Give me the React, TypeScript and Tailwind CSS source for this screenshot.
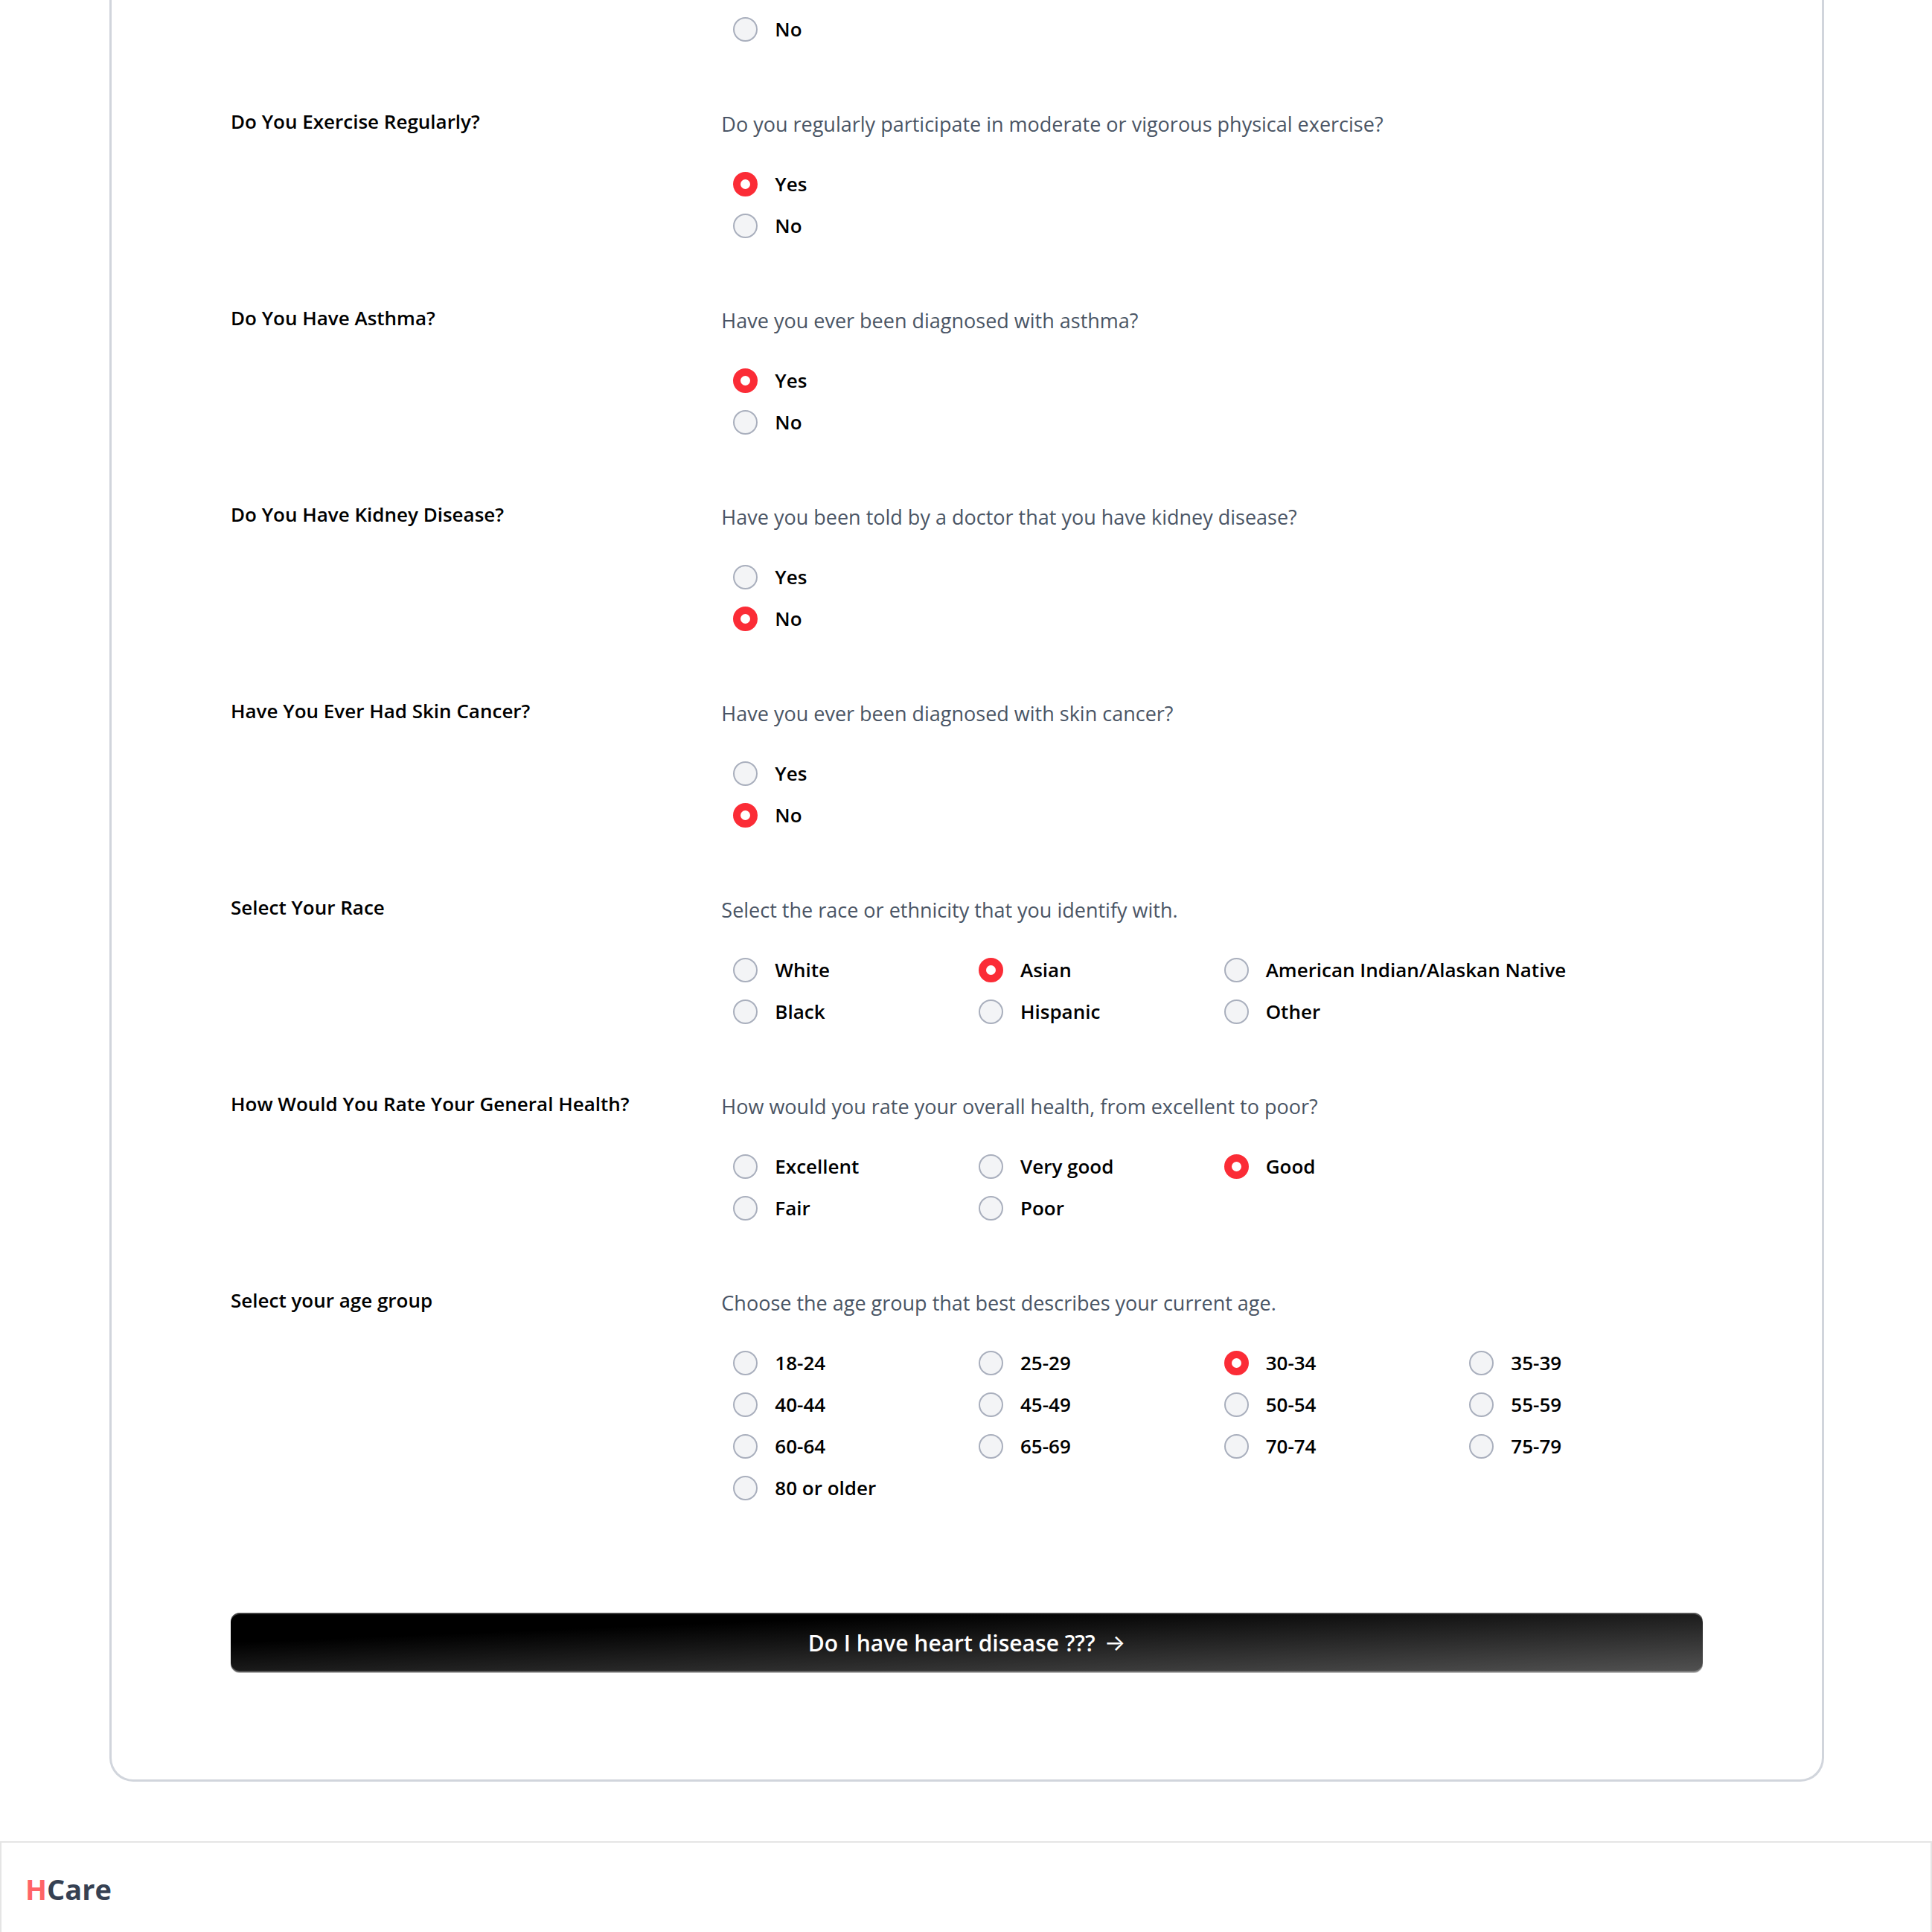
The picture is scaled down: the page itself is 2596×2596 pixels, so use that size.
type Question = {
  id: string;
  title: string;
  hint: string;
  options: string[];
  selected?: string;
  wide?: boolean;
};

const questions: Question[] = [
  {
    id: "exercise",
    title: "Do You Exercise Regularly?",
    hint: "Do you regularly participate in moderate or vigorous physical exercise?",
    options: ["Yes", "No"],
    selected: "Yes",
  },
  {
    id: "asthma",
    title: "Do You Have Asthma?",
    hint: "Have you ever been diagnosed with asthma?",
    options: ["Yes", "No"],
    selected: "Yes",
  },
  {
    id: "kidney",
    title: "Do You Have Kidney Disease?",
    hint: "Have you been told by a doctor that you have kidney disease?",
    options: ["Yes", "No"],
    selected: "No",
  },
  {
    id: "skin",
    title: "Have You Ever Had Skin Cancer?",
    hint: "Have you ever been diagnosed with skin cancer?",
    options: ["Yes", "No"],
    selected: "No",
  },
  {
    id: "race",
    title: "Select Your Race",
    hint: "Select the race or ethnicity that you identify with.",
    options: ["White", "Asian", "American Indian/Alaskan Native", "Black", "Hispanic", "Other"],
    selected: "Asian",
    wide: true,
  },
  {
    id: "health",
    title: "How Would You Rate Your General Health?",
    hint: "How would you rate your overall health, from excellent to poor?",
    options: ["Excellent", "Very good", "Good", "Fair", "Poor"],
    selected: "Good",
    wide: true,
  },
  {
    id: "age",
    title: "Select your age group",
    hint: "Choose the age group that best describes your current age.",
    options: [
      "18-24", "25-29", "30-34", "35-39",
      "40-44", "45-49", "50-54", "55-59",
      "60-64", "65-69", "70-74", "75-79",
      "80 or older",
    ],
    selected: "30-34",
  },
];

function Option({ name, label, checked }: { name: string; label: string; checked: boolean }) {
  return (
    <label className="flex h-14 items-center gap-[23px] pl-4 text-[26px] font-semibold whitespace-nowrap text-black">
      <input
        type="radio"
        name={name}
        defaultChecked={checked}
        className="size-[33px] shrink-0 appearance-none rounded-full border-2 border-[#a9afbd] bg-gray-100 checked:border-10 checked:border-[#fb2c36] checked:bg-white"
      />
      <span>{label}</span>
    </label>
  );
}

function optionGrid(q: Question) {
  if (q.id === "age") return "grid grid-cols-4";
  if (q.wide) return "grid w-3/4 grid-cols-3";
  return "grid grid-cols-1";
}

function QuestionRow({ q }: { q: Question }) {
  return (
    <div role="radiogroup" aria-labelledby={q.id} className="grid grid-cols-3 pb-19">
      <h3 id={q.id} className="text-[26px] leading-10 font-semibold text-black">{q.title}</h3>
      <div className="col-span-2 pt-1">
        <p className="text-[27px] leading-10 text-gray-600">{q.hint}</p>
        <div className={`mt-8 ${optionGrid(q)}`}>
          {q.options.map((o) => (
            <Option key={o} name={q.id} label={o} checked={o === q.selected} />
          ))}
        </div>
      </div>
    </div>
  );
}

export default function App() {
  return (
    <div className="bg-white font-['Segoe_UI','Open_Sans',sans-serif]">
      <main className="pr-[145px] pl-[147px]">
        <form
          className="rounded-b-4xl border-3 border-t-0 border-gray-300 px-40 pt-[11px] pb-36"
          onSubmit={(e) => e.preventDefault()}
        >
          <div className="grid grid-cols-3 pb-19">
            <div className="col-span-2 col-start-2">
              <Option name="previous" label="No" checked={false} />
            </div>
          </div>
          {questions.map((q) => (
            <QuestionRow key={q.id} q={q} />
          ))}
          <button
            type="submit"
            className="mt-16 flex h-20 w-full items-center justify-center gap-3 rounded-xl bg-linear-to-br/srgb from-black from-25% to-[#525252] text-[30px] font-semibold text-white shadow-[inset_0_2px_0_#ffffff40,inset_0_-2px_0_#ffffff40,0_1px_0_#00000040]"
          >
            <span>Do I have heart disease ???</span>
            <span className="font-['Inter',sans-serif] font-normal">→</span>
          </button>
        </form>
      </main>
      <footer className="mt-20 border-2 border-b-0 border-[#e5e5e5] px-8 pt-8 pb-7">
        <a href="#home" className="block text-[38px] leading-[60px] font-bold text-[#364153]">
          <span className="text-[#ff6467]">H</span>Care
        </a>
      </footer>
    </div>
  );
}
